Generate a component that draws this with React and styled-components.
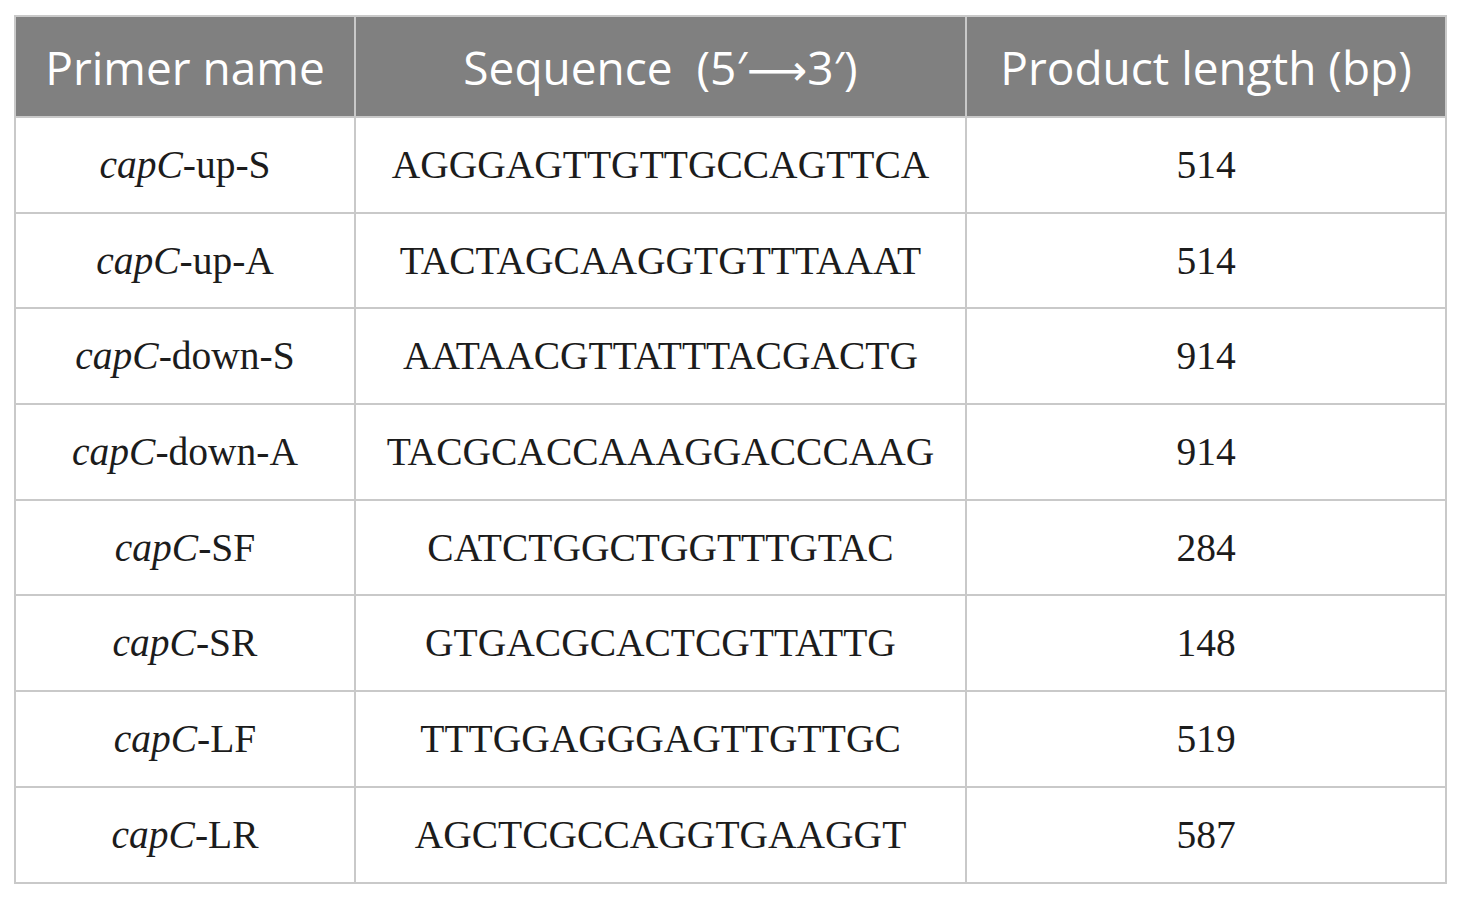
import React from "react"
import styled, { createGlobalStyle } from "styled-components"

const GlobalStyle = createGlobalStyle`
  body {
    margin: 0;
    background: #ffffff;
  }
`

const Page = styled.div`
  padding: 15px 0 0 14px;
`

const Table = styled.table`
  border-collapse: collapse;
  table-layout: fixed;
  width: 1431px;
`

const HeadCell = styled.th`
  height: 99px;
  padding: 0;
  background: #808080;
  color: #ffffff;
  font-family: "Open Sans", "Noto Sans", sans-serif;
  font-weight: 400;
  font-size: 46px;
  text-align: center;
  border: 2px solid #c9c9c9;
  width: ${(props) => props.w}px;
`

const Arrow = styled.span`
  font-family: "DejaVu Sans", sans-serif;
  font-size: 42px;
`

const Cell = styled.td`
  height: 93.7px;
  padding: 0;
  text-align: center;
  font-family: "Liberation Serif", "DejaVu Serif", serif;
  font-size: 39.5px;
  color: #1c1c1c;
  border: 2px solid #c9c9c9;
`

const Gene = styled.i`
  font-style: italic;
`

const rows = [
  ["up-S", "AGGGAGTTGTTGCCAGTTCA", "514"],
  ["up-A", "TACTAGCAAGGTGTTTAAAT", "514"],
  ["down-S", "AATAACGTTATTTACGACTG", "914"],
  ["down-A", "TACGCACCAAAGGACCCAAG", "914"],
  ["SF", "CATCTGGCTGGTTTGTAC", "284"],
  ["SR", "GTGACGCACTCGTTATTG", "148"],
  ["LF", "TTTGGAGGGAGTTGTTGC", "519"],
  ["LR", "AGCTCGCCAGGTGAAGGT", "587"],
]

export default function App() {
  return (
    <Page>
      <GlobalStyle />
      <Table>
        <thead>
          <tr>
            <HeadCell w={338}>Primer name</HeadCell>
            <HeadCell w={609}>
              Sequence&nbsp; (5′<Arrow>⟶</Arrow>3′)
            </HeadCell>
            <HeadCell w={478}>Product length (bp)</HeadCell>
          </tr>
        </thead>
        <tbody>
          {rows.map(([suffix, seq, len]) => (
            <tr key={suffix}>
              <Cell>
                <Gene>capC</Gene>-{suffix}
              </Cell>
              <Cell>{seq}</Cell>
              <Cell>{len}</Cell>
            </tr>
          ))}
        </tbody>
      </Table>
    </Page>
  )
}
